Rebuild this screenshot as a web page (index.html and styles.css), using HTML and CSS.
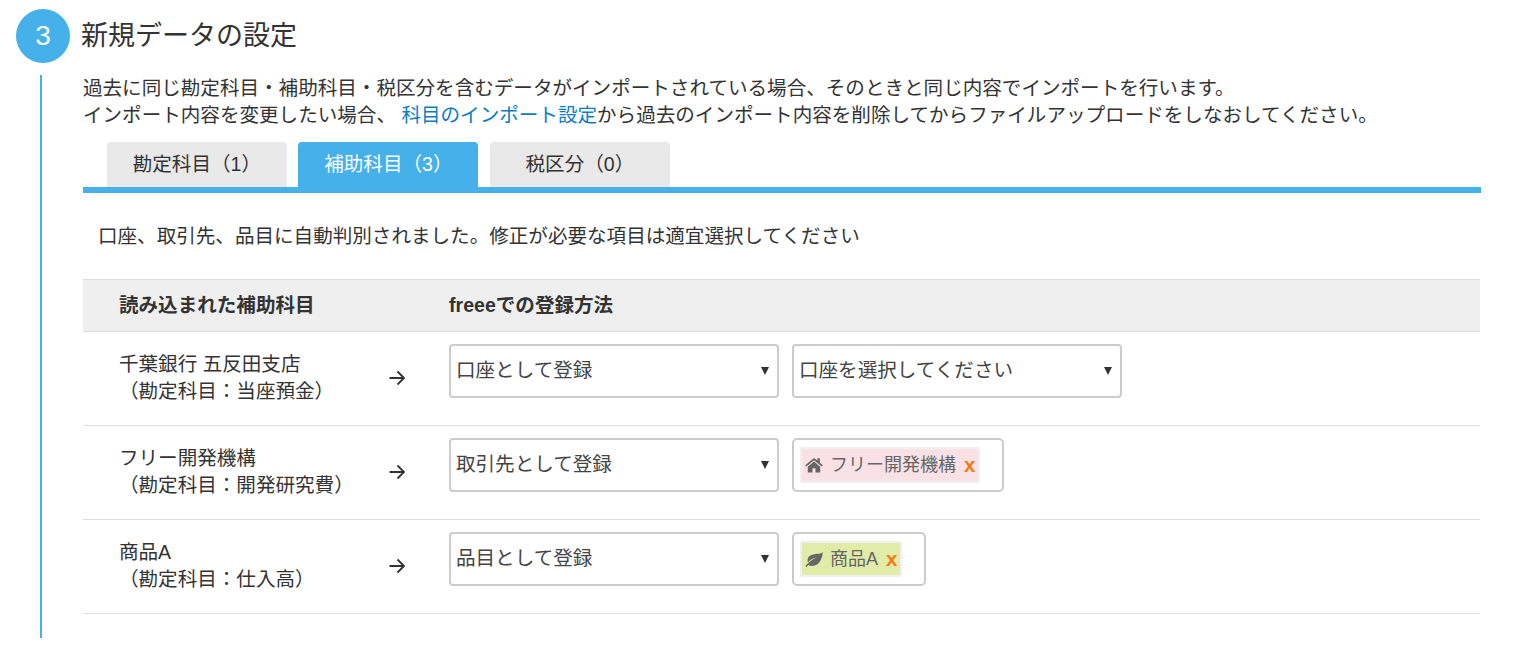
FILE: index.html
```html
<!DOCTYPE html>
<html lang="ja">
<head>
    <title>新規データの設定</title>
    <link rel="stylesheet" href="styles.css">
</head>
<body>
<div class="step-head">
    <div class="step-num">3</div>
    <h2 class="step-title">新規データの設定</h2>
</div>
<div class="step-body">
    <p class="desc">過去に同じ勘定科目・補助科目・税区分を含むデータがインポートされている場合、そのときと同じ内容でインポートを行います。<br>インポート内容を変更したい場合、 <a href="#" class="link">科目のインポート設定</a>から過去のインポート内容を削除してからファイルアップロードをしなおしてください。</p>
    <div class="tabs">
        <div class="tab">勘定科目（1）</div>
        <div class="tab active">補助科目（3）</div>
        <div class="tab">税区分（0）</div>
    </div>
    <p class="note">口座、取引先、品目に自動判別されました。修正が必要な項目は適宜選択してください</p>
    <div class="list">
        <div class="row row-head">
            <div class="col-name">読み込まれた補助科目</div>
            <div class="col-arrow"></div>
            <div class="col-method">freeeでの登録方法</div>
        </div>
        <div class="row">
            <div class="col-name">千葉銀行 五反田支店<br>（勘定科目：当座預金）</div>
            <div class="col-arrow">
                <svg class="arrow" viewBox="0 0 16 16"><path d="M0.5 8H15M8.5 1.5L15 8L8.500 14.500"/></svg>
            </div>
            <div class="col-method">
                <div class="select">口座として登録</div>
                <div class="select">口座を選択してください</div>
            </div>
        </div>
        <div class="row">
            <div class="col-name">フリー開発機構<br>（勘定科目：開発研究費）</div>
            <div class="col-arrow">
                <svg class="arrow" viewBox="0 0 16 16"><path d="M0.5 8H15M8.5 1.5L15 8L8.500 14.500"/></svg>
            </div>
            <div class="col-method">
                <div class="select">取引先として登録</div>
                <div class="tag-box">
                    <span class="tag tag-partner">
                        <svg class="tag-icon" viewBox="0 0 18 16"><path d="M9 1L0.2 8.300l1.100 1.300L9 3.200l7.700 6.400 1.100-1.300-3-2.500V1.300h-2.400v2.100L9 1zM9 4.600L2.800 9.700V15.500h4.700v-4.200h3V15.500h4.700V9.700L9 4.600z"/></svg>
                        フリー開発機構<b class="tag-x">x</b>
                    </span>
                </div>
            </div>
        </div>
        <div class="row">
            <div class="col-name">商品A<br>（勘定科目：仕入高）</div>
            <div class="col-arrow">
                <svg class="arrow" viewBox="0 0 16 16"><path d="M0.5 8H15M8.5 1.5L15 8L8.500 14.500"/></svg>
            </div>
            <div class="col-method">
                <div class="select">品目として登録</div>
                <div class="tag-box">
                    <span class="tag tag-item">
                        <svg class="tag-icon" viewBox="0 0 18 16"><path d="M17.800 1c-.8 1.300-2.300 1.700-5 1.800C7.500 3 3.200 4.600 2.600 8.700c-.2 1.100 0 2 .3 2.700 2-2.600 5-4.300 8.900-5C8 8 4.300 10.400 1.700 13.600L.4 15l1.300.9 1.500-2c1.600.9 4 1.300 6.300.7 5-1.300 7.700-6.600 8.300-13.600z"/></svg>
                        商品A<b class="tag-x">x</b>
                    </span>
                </div>
            </div>
        </div>
    </div>
</div>
</body>
</html>
```

FILE: styles.css
```css
*{box-sizing:border-box;}
body{margin:0;background:#fff;color:#333;font-family:"Liberation Sans","Noto Sans CJK JP",sans-serif;font-size:19.57px;line-height:27px;}
.step-head{display:flex;align-items:center;padding:9px 0 0 16px;}
.step-num{width:54px;height:54px;border-radius:50%;background:#45b0e9;color:#fff;font-size:28px;line-height:54px;text-align:center;}
.step-title{margin:0 0 0 11px;font-size:27px;font-weight:normal;line-height:54px;}
.step-body{margin:12px 0 0 40px;padding:0 59px 24px 41px;border-left:2px solid #45b0e9;height:563px;}
.desc{margin:0;}
.link{color:#0d7cc1;text-decoration:none;}
.tabs{display:flex;gap:11.5px;margin-top:13px;padding-left:23.9px;border-bottom:6px solid #45b0e9;}
.tab{width:180px;height:45px;background:#e9e9e9;border-radius:4px 4px 0 0;text-align:center;line-height:44px;}
.tab.active{background:#45b0e9;color:#fff;}
.note{margin:30px 0 0 15px;}
.list{margin:29px 1px 0 0;}
.row{display:flex;align-items:flex-start;height:94px;border-bottom:1px solid #ddd;}
.row-head{height:53px;align-items:center;background:#efefef;border-top:1px solid #ddd;font-weight:bold;}
.col-name{width:278px;padding-left:36px;}
.row .col-name{margin-top:19px;}
.row-head .col-name{margin-top:0;}
.col-arrow{width:88px;display:flex;padding:38px 0 0 28px;}
.row-head .col-arrow{padding:0;}
.col-method{display:flex;gap:13px;padding-top:12px;}
.row-head .col-method{padding-top:0;}
.arrow{display:block;width:16px;height:16px;fill:none;stroke:#333;stroke-width:1.9;}
.select{position:relative;width:330px;height:54px;border:2px solid #ccc;border-radius:4px;padding:1px 5px 0;line-height:46px;color:#444;}
.select:after{content:"";position:absolute;right:8px;top:21px;border:4.5px solid transparent;border-top:8px solid #333;border-bottom:0;}
.tag-box{height:54px;border:2px solid #ccc;border-radius:5px;padding:7px 22px 7px 6px;display:flex;align-items:center;}
.tag{display:flex;align-items:center;height:36px;padding:0 3px;border:2px solid #f0f0f0;border-radius:2px;color:#666;font-size:18px;}
.tag-partner{background:#f9e1e5;}
.tag-item{background:#e0eca8;}
.tag-icon{width:18px;height:16px;margin-right:7px;fill:#666;}
.tag-x{margin:-2px 0 0 8px;color:#f27a1a;font-size:20.5px;}
```
